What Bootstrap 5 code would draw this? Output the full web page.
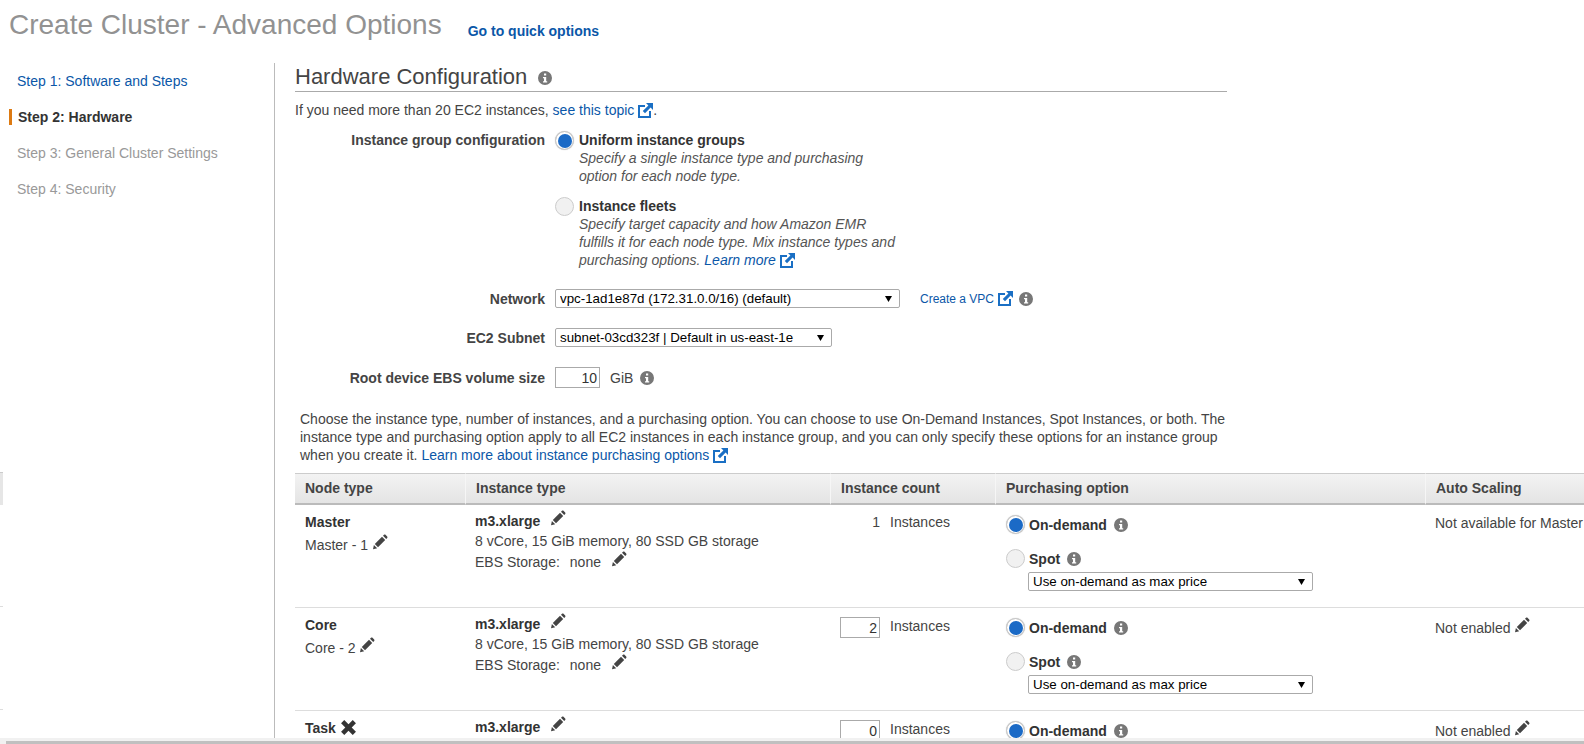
<!DOCTYPE html>
<html lang="en">

<head>
    <meta charset="UTF-8">
    <meta name="viewport" content="width=device-width, initial-scale=1.0">
    <title>Create Cluster - Advanced Options</title>
    <link href="https://cdn.jsdelivr.net/npm/bootstrap@5.3.0/dist/css/bootstrap.min.css" rel="stylesheet">
    <style>
        html, body { height: 744px; overflow: hidden; }
        body { font-family: "Liberation Sans", Arial, sans-serif; font-size: 14px; line-height: 18px; color: #444; background: #fff; }
        a { color: #0b57a8; text-decoration: none; }
        svg { flex: none; }
        .ico-info { width: 14px; height: 14px; vertical-align: -2px; fill: #777; }
        .ico-ext { width: 15px; height: 15px; vertical-align: -3px; fill: #1a6fc4; }
        .ico-pen { width: 16px; height: 16px; vertical-align: 0; fill: #444; }
        .pen-gap { margin-left: 10px; }

        .page-head { height: 63px; padding: 9px 0 0 9px; }
        .page-title { font-size: 28px; line-height: 32px; font-weight: 400; color: #929292; margin: 0; }
        .quick-link { font-size: 14px; font-weight: 700; margin: 13px 0 0 26px; }

        .page-body { height: 675px; }
        .step-side { width: 275px; flex: none; border-right: 1px solid #bbb; padding-top: 9px; }
        .step-item { height: 36px; line-height: 18px; padding: 0 0 0 17px; color: #999; }
        .step-item.current { color: #333; font-weight: 700; position: relative; padding-left: 18px; }
        .step-item.current::before { content: ""; position: absolute; left: 9px; top: 1px; width: 3px; height: 16px; background: #dd7a12; }

        .main-pane { padding-left: 20px; min-width: 0; flex: 1; overflow: hidden; }
        .sect-width { width: 932px; }
        .sect-title { font-size: 22px; line-height: 28px; font-weight: 400; color: #444; margin: 0; padding-bottom: 1px; height: 29px; border-bottom: 1px solid #aaa; }
        .sect-title .ico-info { margin-left: 11px; vertical-align: -1px; }
        .intro-line { margin: 9px 0 0; height: 18px; }

        .form-line { display: flex; }
        .first-line { margin-top: 12px; }
        .form-cap { width: 250px; flex: none; text-align: right; font-weight: 700; color: #444; }
        .form-ctl { margin-left: 10px; display: flex; align-items: center; }
        .radio-col { margin-left: 10px; }
        .radio-gap { gap: 5px; }

        .radio-pick { appearance: none; width: 19px; height: 19px; flex: none; margin: 0; border: 1px solid #ccc; border-radius: 50%; background: #f1f1f1; display: block; }
        .radio-pick:checked { background: #1b6ac6; background-clip: content-box; padding: 1.5px; box-shadow: 0 0 1px #bbb; }
        .radio-title { font-weight: 700; color: #333; }
        .radio-note { font-style: italic; color: #555; }

        .plain-select.form-select { --bs-form-select-bg-img: url("data:image/svg+xml,%3csvg xmlns='http://www.w3.org/2000/svg' viewBox='0 0 8 8'%3e%3cpath d='M0 1h7L3.5 7z' fill='%23000'/%3e%3c/svg%3e"); font-family: "Liberation Sans", Arial, sans-serif; font-size: 13.33px; line-height: 15px; color: #000; height: 19px; min-height: 0; padding: 1px 16px 1px 4px; border: 1px solid #aaa; border-radius: 2px; background-position: right 6px center; background-size: 8px 8px; }
        .num-box.form-control { font-family: "Liberation Sans", Arial, sans-serif; font-size: 14px; line-height: 17px; color: #333; text-align: right; height: 21px; min-height: 0; padding: 1px 2px 1px 4px; border: 1px solid #aaa; border-radius: 0; }
        .vpc-link { font-size: 12px; margin-left: 20px; }
        .vpc-link + .ico-ext { margin-left: 4px; }
        .vpc-info { margin-left: 6px; }
        .gib-text { margin-left: 10px; }
        .gib-info { margin-left: 7px; }

        .net-row, .subnet-row, .root-row { margin-top: 20px; }
        .net-select { width: 345px; }
        .subnet-select { width: 277px; }
        .root-box { width: 45px; }

        .choose-text { margin: 22px 0 0 5px; width: 930px; }

        .node-table { table-layout: fixed; width: 1400px; border-collapse: separate; border-spacing: 0; margin: 9px 0 0; color: #444; }
        .node-table th:nth-child(1) { width: 170px; }
        .node-table th:nth-child(2) { width: 365px; }
        .node-table th:nth-child(3) { width: 165px; }
        .node-table th:nth-child(4) { width: 430px; }
        .node-table th:nth-child(5) { width: 270px; }
        .node-table th { height: 32px; padding: 0 0 2px 10px; font-weight: 700; vertical-align: middle; color: #444; background: linear-gradient(#f3f3f3, #e4e4e4); border-top: 1px solid #ccc; border-bottom: 2px solid #bbb; border-left: 1px solid #f6f6f6; }
        .node-table th:first-child { border-left: 0; }
        .node-table td { height: 103px; padding: 0; vertical-align: top; border-bottom: 1px solid #ddd; }
        .node-name { padding: 8px 0 0 10px; }
        .node-sub { margin-top: 3px; }
        .node-type { padding: 5px 0 0 10px; line-height: 20px; }
        .ebs-val { margin-left: 10px; }
        .node-strong { font-weight: 700; color: #333; }
        .node-count { display: flex; align-items: flex-start; padding: 8px 0 0 9px; }
        .count-val { width: 41px; text-align: right; }
        .count-label { margin-left: 10px; }
        .count-box.form-control { width: 40px; margin: 1px 0 0 1px; }
        .count-box + .count-label { margin-top: 1px; }
        .buy-opts { padding: 10px 0 0 11px; }
        .buy-line { display: flex; align-items: center; gap: 4px; height: 19px; }
        .buy-line .ico-info { margin-left: 3px; }
        .buy-spot { margin-top: 15px; }
        .buy-select.form-select { width: 285px; margin: 4px 0 0 22px; }
        .scale-cell { padding: 9px 0 0 10px; }

        .bar-ghost { position: absolute; left: 0; width: 3px; }
        .ghost-head { top: 472px; height: 33px; background: #e6e6e6; border-top: 1px solid #ccc; }
        .ghost-line { height: 1px; background: #ddd; }
        .ghost-a { top: 606px; }
        .ghost-b { top: 709px; }
        .scroll-track { position: absolute; left: 0; right: 0; bottom: 0; height: 6px; background: #f1f1f1; padding-left: 6px; padding-top: 3px; }
        .scroll-thumb { height: 3px; background: #c0c0c0; }
    </style>
</head>

<body>
    <svg width="0" height="0" class="position-absolute">
        <symbol id="i-info" viewBox="0 0 14 14"><path fill-rule="evenodd" d="M7 0a7 7 0 1 1 0 14A7 7 0 0 1 7 0zM6 2.5v2h2.2v-2zM5 6v1.3h1v3H5v1.3h4.2v-1.3h-1V6z"/></symbol>
        <symbol id="i-ext" viewBox="0 0 15 15"><path d="M0 2h7v2H2v9h9V8h2v7H0z"/><path d="M8 0h7v7l-2.4-2.4L7 10.2 4.8 8l5.6-5.6z"/></symbol>
        <symbol id="i-pen" viewBox="0 0 16 16"><path d="M1 15.2l.9-4.2 3.3 3.3zM2.8 10L10 2.8l3.2 3.2L6 13.2zM11 1.8l1-1c.5-.4 1-.4 1.5 0l1.7 1.7c.4.5.4 1 0 1.5l-1 1z"/></symbol>
    </svg>

    <div class="bar-ghost ghost-head"></div>
    <div class="bar-ghost ghost-line ghost-a"></div>
    <div class="bar-ghost ghost-line ghost-b"></div>

    <div class="page-head d-flex align-items-start">
        <h1 class="page-title">Create Cluster - Advanced Options</h1>
        <a href="#" class="quick-link">Go to quick options</a>
    </div>

    <div class="page-body d-flex">
        <div class="step-side">
            <div class="step-item"><a href="#">Step 1: Software and Steps</a></div>
            <div class="step-item current">Step 2: Hardware</div>
            <div class="step-item">Step 3: General Cluster Settings</div>
            <div class="step-item">Step 4: Security</div>
        </div>

        <div class="main-pane">
            <div class="sect-width">
                <h2 class="sect-title">Hardware Configuration<svg class="ico-info"><use href="#i-info"/></svg></h2>
                <p class="intro-line">If you need more than 20 EC2 instances, <a href="#">see this topic</a> <svg class="ico-ext"><use href="#i-ext"/></svg>.</p>

                <div class="form-line first-line">
                    <div class="form-cap">Instance group configuration</div>
                    <div class="radio-col">
                        <div class="d-flex radio-gap">
                            <input class="radio-pick" type="radio" name="groupcfg" checked>
                            <div>
                                <div class="radio-title">Uniform instance groups</div>
                                <div class="radio-note">Specify a single instance type and purchasing<br>option for each node type.</div>
                            </div>
                        </div>
                        <div class="d-flex radio-gap mt-2 pt-1">
                            <input class="radio-pick" type="radio" name="groupcfg">
                            <div>
                                <div class="radio-title">Instance fleets</div>
                                <div class="radio-note">Specify target capacity and how Amazon EMR<br>fulfills it for each node type. Mix instance types and<br>purchasing options. <a href="#">Learn more</a> <svg class="ico-ext"><use href="#i-ext"/></svg></div>
                            </div>
                        </div>
                    </div>
                </div>

                <div class="form-line align-items-center net-row">
                    <div class="form-cap">Network</div>
                    <div class="form-ctl">
                        <select class="form-select plain-select net-select"><option>vpc-1ad1e87d (172.31.0.0/16) (default)</option></select>
                        <a href="#" class="vpc-link">Create a VPC</a>
                        <svg class="ico-ext"><use href="#i-ext"/></svg>
                        <svg class="ico-info vpc-info"><use href="#i-info"/></svg>
                    </div>
                </div>

                <div class="form-line align-items-center subnet-row">
                    <div class="form-cap">EC2 Subnet</div>
                    <div class="form-ctl">
                        <select class="form-select plain-select subnet-select"><option>subnet-03cd323f | Default in us-east-1e</option></select>
                    </div>
                </div>

                <div class="form-line align-items-center root-row">
                    <div class="form-cap">Root device EBS volume size</div>
                    <div class="form-ctl">
                        <input class="form-control num-box root-box" value="10">
                        <span class="gib-text">GiB</span>
                        <svg class="ico-info gib-info"><use href="#i-info"/></svg>
                    </div>
                </div>

                <p class="choose-text">Choose the instance type, number of instances, and a purchasing option. You can choose to use On-Demand Instances, Spot Instances, or both. The instance type and purchasing option apply to all EC2 instances in each instance group, and you can only specify these options for an instance group when you create it. <a href="#">Learn more about instance purchasing options</a> <svg class="ico-ext"><use href="#i-ext"/></svg></p>
            </div>

            <table class="node-table">
                <thead>
                    <tr>
                        <th>Node type</th>
                        <th>Instance type</th>
                        <th>Instance count</th>
                        <th>Purchasing option</th>
                        <th>Auto Scaling</th>
                    </tr>
                </thead>
                <tbody id="nodeRows"></tbody>
            </table>
        </div>
    </div>

    <div class="scroll-track"><div class="scroll-thumb"></div></div>

    <script src="https://cdn.jsdelivr.net/npm/bootstrap@5.3.0/dist/js/bootstrap.bundle.min.js"></script>
    <script>
        const pen = '<svg class="ico-pen"><use href="#i-pen"/></svg>';
        const penGap = '<svg class="ico-pen pen-gap"><use href="#i-pen"/></svg>';
        const info = '<svg class="ico-info"><use href="#i-info"/></svg>';
        const cross = '<svg width="17" height="17" viewBox="0 0 16 16" class="align-text-bottom"><path d="M1 4l3-3 4 4 4-4 3 3-4 4 4 4-3 3-4-4-4 4-3-3 4-4z" fill="#333"/></svg>';

        const nodes = [
            { name: 'Master', sub: 'Master - 1 ' + pen, count: '<span class="count-val">1</span>', scale: 'Not available for Master' },
            { name: 'Core', sub: 'Core - 2 ' + pen, count: '<input class="form-control num-box count-box" value="2">', scale: 'Not enabled ' + pen },
            { name: 'Task ' + cross, sub: '', count: '<input class="form-control num-box count-box" value="0">', scale: 'Not enabled ' + pen }
        ];

        document.getElementById('nodeRows').innerHTML = nodes.map((n, i) => `
            <tr>
                <td><div class="node-name"><div class="node-strong">${n.name}</div><div class="node-sub">${n.sub}</div></div></td>
                <td><div class="node-type"><div><span class="node-strong">m3.xlarge</span>${penGap}</div>
                    <div>8 vCore, 15 GiB memory, 80 SSD GB storage</div>
                    <div>EBS Storage:<span class="ebs-val">none</span>${penGap}</div></div></td>
                <td><div class="node-count">${n.count}<span class="count-label">Instances</span></div></td>
                <td><div class="buy-opts">
                    <div class="buy-line"><input class="radio-pick" type="radio" name="buy${i}" checked><span class="node-strong">On-demand</span>${info}</div>
                    <div class="buy-line buy-spot"><input class="radio-pick" type="radio" name="buy${i}"><span class="node-strong">Spot</span>${info}</div>
                    <select class="form-select plain-select buy-select"><option>Use on-demand as max price</option></select>
                </div></td>
                <td><div class="scale-cell">${n.scale}</div></td>
            </tr>`).join('');
    </script>
</body>

</html>
